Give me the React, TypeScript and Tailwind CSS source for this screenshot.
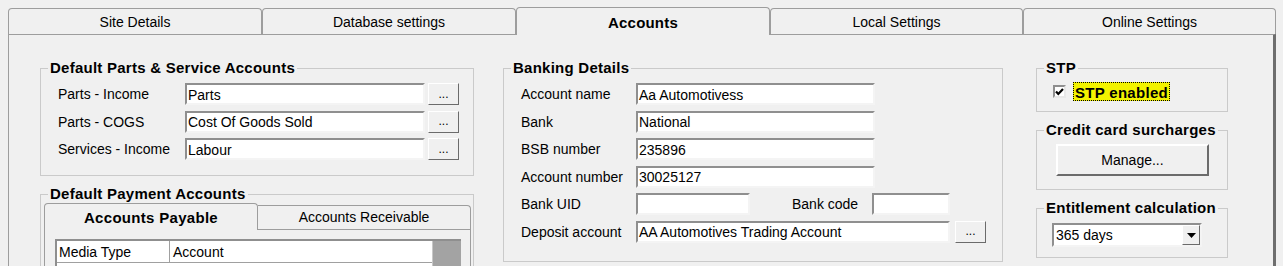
import React from "react";

// classic sunken text box
const Field = ({ value = "", w }: { value?: string; w: string }) => (
  <div
    className={`${w} h-[22px] bg-white border-2 border-t-[#8f8f8f] border-l-[#8f8f8f] border-b-[#f4f4f4] border-r-[#f4f4f4] flex items-center pl-px pt-px leading-none whitespace-nowrap overflow-hidden`}
  >
    {value}
  </div>
);

const Dots = () => (
  <button className="w-[31px] h-[22px] bg-[#f0f0f0] border border-t-white border-l-white border-b-[#6b6b6b] border-r-[#6b6b6b] flex items-center justify-center text-[12px] leading-none pb-px">
    ...
  </button>
);

const Group = ({
  title,
  className = "",
  children,
}: {
  title: string;
  className?: string;
  children: React.ReactNode;
}) => (
  <fieldset className={`border border-[#cacaca] p-0 m-0 min-w-0 ${className}`}>
    <legend className="ml-[7px] px-[2px] font-bold text-[15px] tracking-[0.25px] leading-[20px]">
      {title}
    </legend>
    {children}
  </fieldset>
);

const tabs = ["Site Details", "Database settings", "Accounts", "Local Settings", "Online Settings"];

export default function App() {
  return (
    <div className="w-[1283px] h-[266px] overflow-hidden bg-[#f0f0f0] text-black text-[14px] font-['Liberation_Sans',Arial,sans-serif]">
      {/* top tabs */}
      <div className="flex items-end h-[34px] pl-2 pt-[7px]">
        {tabs.map((t, i) =>
          i === 2 ? (
            <div
              key={t}
              className="relative z-10 -mb-px w-[254px] h-[28px] bg-[#f0f0f0] border border-b-0 border-[#9d9d9d] rounded-t-[4px] flex items-center justify-center font-bold text-[15px] tracking-[0.2px] pt-[3px]"
            >
              {t}
            </div>
          ) : (
            <div
              key={t}
              className={`${i > 2 ? "w-[253px]" : "w-[254px]"} h-[26px] bg-[#f0f0f0] border border-b-0 border-[#9d9d9d] rounded-t-[4px] flex items-center justify-center pt-[2px]`}
            >
              {t}
            </div>
          )
        )}
      </div>

      {/* panel */}
      <div className="ml-2 w-[1268px] h-[240px] border-l border-t border-[#9d9d9d] border-r-[3px] border-r-[#6e6e6e] flex pl-[31px] pt-[23px]">
        {/* left column */}
        <div className="w-[434px] flex flex-col">
          <Group title="Default Parts & Service Accounts">
            <div className="flex flex-col gap-[5.5px] pt-[5px] pb-[15px] pl-[17px]">
              {[
                ["Parts - Income", "Parts"],
                ["Parts - COGS", "Cost Of Goods Sold"],
                ["Services - Income", "Labour"],
              ].map(([l, v]) => (
                <div key={l} className="flex items-center">
                  <div className="w-[127px] pt-px">{l}</div>
                  <Field value={v} w="w-[240px]" />
                  <div className="ml-[3px]">
                    <Dots />
                  </div>
                </div>
              ))}
            </div>
          </Group>

          <Group title="Default Payment Accounts" className="mt-[8px] h-[120px]">
            <div className="pl-[3px] pr-[2px]">
              <div className="flex items-end h-[26px] -mt-px">
                <div className="relative z-10 -mb-px w-[214px] h-[27px] bg-[#f0f0f0] border border-b-0 border-[#9d9d9d] rounded-t-[4px] flex items-center justify-center font-bold text-[15px] tracking-[0.3px] pt-[2px]">
                  Accounts Payable
                </div>
                <div className="w-[213px] h-[24px] bg-[#f0f0f0] border border-b-0 border-l-0 border-[#9d9d9d] rounded-tr-[4px] flex items-center justify-center">
                  Accounts Receivable
                </div>
              </div>
              <div className="w-[427px] h-[60px] border-l border-t border-r border-[#9d9d9d] pl-[10px] pt-[9px]">
                <div className="w-[406px] flex border-t-2 border-l-2 border-t-[#8f8f8f] border-l-[#8f8f8f] bg-white">
                  <div className="w-[113px] h-[22px] border-r border-b border-[#a0a0a0] flex items-center pl-[2px] pt-px">
                    Media Type
                  </div>
                  <div className="w-[262px] h-[22px] border-b border-[#a0a0a0] flex items-center pl-[3px] pt-px">
                    Account
                  </div>
                  <div className="w-[29px] h-[40px] bg-[#a3a3a3] border-l border-[#c8c8c8]" />
                </div>
              </div>
            </div>
          </Group>
        </div>

        {/* middle column */}
        <div className="w-[500px] ml-[29px]">
          <Group title="Banking Details">
            <div className="flex flex-col gap-[5.5px] pt-[5px] pb-[18px] pl-[17px]">
              {[
                ["Account name", "Aa Automotivess"],
                ["Bank", "National"],
                ["BSB number", "235896"],
                ["Account number", "30025127"],
              ].map(([l, v]) => (
                <div key={l} className="flex items-center">
                  <div className="w-[115px] pt-px">{l}</div>
                  <Field value={v} w="w-[239px]" />
                </div>
              ))}
              <div className="flex items-center">
                <div className="w-[115px] pt-px">Bank UID</div>
                <Field w="w-[114px]" />
                <div className="w-[80px] ml-[42px] pt-px">Bank code</div>
                <Field w="w-[78px]" />
              </div>
              <div className="flex items-center">
                <div className="w-[115px] pt-px">Deposit account</div>
                <Field value="AA Automotives Trading Account" w="w-[314px]" />
                <div className="ml-[5px]">
                  <Dots />
                </div>
              </div>
            </div>
          </Group>
        </div>

        {/* right column */}
        <div className="w-[192px] ml-[33px] flex flex-col">
          <Group title="STP">
            <div className="flex items-center pt-[4px] pb-[10px] pl-[16px]">
              <div className="w-[13px] h-[13px] bg-white border-2 border-t-[#8f8f8f] border-l-[#8f8f8f] border-b-[#e8e8e8] border-r-[#e8e8e8] flex items-center justify-center">
                <svg width="9" height="8" viewBox="0 0 9 8">
                  <path d="M1 3.5 L3.3 6 L8 1" fill="none" stroke="#000" strokeWidth="2.2" />
                </svg>
              </div>
              <div className="ml-[7px] h-[19px] px-[1px] bg-[#f3f300] border border-dotted border-black font-bold text-[15px] tracking-[0.3px] flex items-center leading-none pt-px">
                STP enabled
              </div>
            </div>
          </Group>

          <Group title="Credit card surcharges" className="mt-[8px]">
            <div className="pt-[4px] pb-[13px] pl-[19px]">
              <button className="w-[153px] h-[32px] bg-[#f0f0f0] border-2 border-t-white border-l-white border-b-[#6b6b6b] border-r-[#6b6b6b] flex items-center justify-center">
                Manage...
              </button>
            </div>
          </Group>

          <Group title="Entitlement calculation" className="mt-[8px]">
            <div className="pt-[5px] pb-[10px] pl-[15px]">
              <div className="w-[150px] h-[24px] bg-white border-2 border-t-[#8f8f8f] border-l-[#8f8f8f] border-b-[#f4f4f4] border-r-[#f4f4f4] flex items-center">
                <div className="flex-1 pl-[2px] pt-px">365 days</div>
                <div className="w-[18px] h-[20px] bg-[#f0f0f0] border border-t-white border-l-white border-b-[#6b6b6b] border-r-[#6b6b6b] flex items-center justify-center">
                  <svg width="9" height="5" viewBox="0 0 9 5">
                    <path d="M0 0 H9 L4.5 5 Z" fill="#000" />
                  </svg>
                </div>
              </div>
            </div>
          </Group>
        </div>
      </div>
    </div>
  );
}
